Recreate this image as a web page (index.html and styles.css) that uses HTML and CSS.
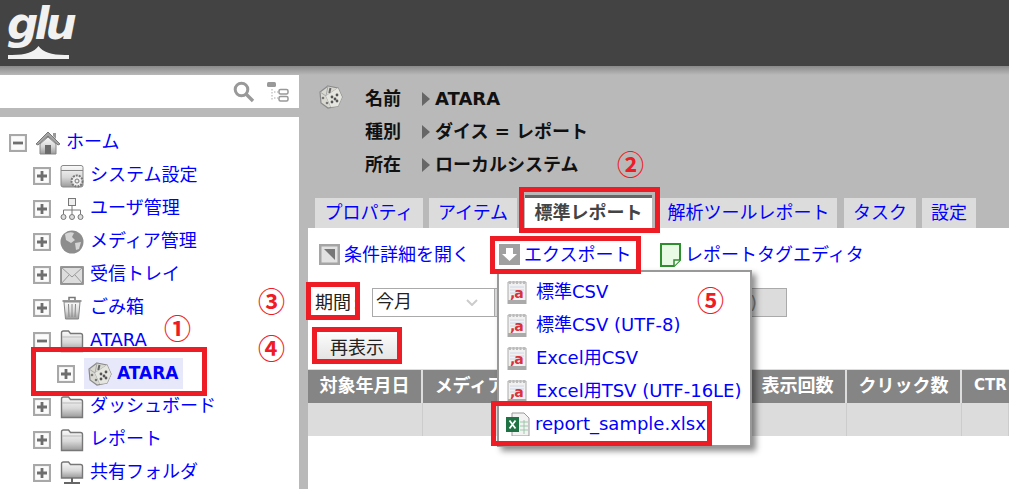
FILE: index.html
```html
<!DOCTYPE html>
<html lang="ja">
<head>
<meta charset="utf-8">
<title>glu</title>
<link rel="stylesheet" href="styles.css">
</head>
<body>
<svg class="defs" aria-hidden="true">
  <defs>
    <linearGradient id="gf" x1="0" y1="0" x2="0" y2="1"><stop offset="0" stop-color="#fafafa"/><stop offset=".55" stop-color="#d8d8d8"/><stop offset="1" stop-color="#9a9a9a"/></linearGradient>
    <symbol id="plus" viewBox="0 0 18 18"><rect x="1" y="1" width="16" height="16" fill="#fbfbfb" stroke="#a8a8a8" stroke-width="2.200"/><path d="M4 9h10M9 4v10" stroke="#6e6e6e" stroke-width="2.800"/></symbol>
    <symbol id="minus" viewBox="0 0 18 18"><rect x="1" y="1" width="16" height="16" fill="#fbfbfb" stroke="#a8a8a8" stroke-width="2.200"/><path d="M4 9h10" stroke="#6e6e6e" stroke-width="2.800"/></symbol>
    <symbol id="folder" viewBox="0 0 24 24"><path d="M1.500 22.500V4q0-2 2-2h5l2 2.500h10q2 0 2 2v16z" fill="url(#gf)" stroke="#777" stroke-width="1.400"/><path d="M2 8h20" stroke="#bbb"/></symbol>
    <symbol id="dice" viewBox="0 0 24 24"><path d="M9 1l10 2 4 9-4 9-10 2-7-5-1-11z" fill="#d9d9d2" stroke="#8a8a8a" stroke-width="1.200"/><path d="M9 1L7 11l12-8M7 11l5 11M7 11L1 7M12 22l7-1 4-9" fill="none" stroke="#a8a8a8"/><path d="M7 11l12-8 4 9-4 9-7 1z" fill="#e6e6e0"/><rect x="10" y="3" width="2" height="5" transform="rotate(14 11 5)" fill="#666"/><circle cx="4" cy="13" r="1.300" fill="#777"/><circle cx="8" cy="18" r="1.300" fill="#777"/><circle cx="13" cy="12" r="1.400" fill="#555"/><circle cx="18" cy="10" r="1.400" fill="#555"/><circle cx="16" cy="14" r="1.400" fill="#555"/><circle cx="13" cy="17" r="1.400" fill="#555"/><circle cx="18" cy="16" r="1.400" fill="#555"/></symbol>
    <symbol id="doc" viewBox="0 0 20 24"><path d="M1 2h18v22H1z" fill="#f1f1f1" stroke="#aaa"/><path d="M2 1h2v3H2zM5.500 1h2v3h-2zM9 1h2v3H9zM12.500 1h2v3h-2zM16 1h2v3h-2z" fill="#bbb"/><path d="M3 7h14M3 10h14M3 13h14" stroke="#cfd6e6"/><path d="M1 20h18v4H1z" fill="#aaa"/></symbol>
  </defs>
</svg>

<header class="topbar">
  <div class="logo"><span class="logo-text">glu</span>
    <svg class="logo-base" viewBox="0 0 62 14"><path d="M0 10q24 1 31-9q7 10 31 9v4H0z" fill="#f1f1f1"/></svg>
  </div>
</header>

<div class="shell">
  <aside class="side">
    <div class="searchbar">
      <svg class="ico-search" viewBox="0 0 22 22"><circle cx="8.500" cy="8.500" r="6.300" fill="none" stroke="#999" stroke-width="3"/><path d="M13 13l7 7" stroke="#999" stroke-width="3.400"/></svg>
      <svg class="ico-treeview" viewBox="0 0 22 20"><rect x="0" y="0" width="9" height="5" rx="1.500" fill="#999"/><path d="M5 7v11M7 10h4M7 16h4" stroke="#aaa" stroke-dasharray="1.500 1.500"/><rect x="12" y="7.500" width="9" height="4.500" rx="1.500" fill="none" stroke="#999" stroke-width="1.500"/><rect x="12" y="14.500" width="9" height="4.500" rx="1.500" fill="none" stroke="#999" stroke-width="1.500"/></svg>
    </div>
    <ul class="tree">
      <li class="row lvl0"><svg class="exp"><use href="#minus"/></svg>
        <svg class="node" viewBox="0 0 24 24"><path d="M0 13L12 1l12 12-2 1L12 5 2 14z" fill="#a5a5a5" stroke="#777"/><path d="M17 2h3v6l-3-3z" fill="#999"/><path d="M4 13l8-7 8 7v10H4z" fill="url(#gf)" stroke="#888"/><path d="M9 23v-9h6v9z" fill="#6a6a6a"/></svg>
        <a class="lnk">ホーム</a></li>
      <li class="row lvl1"><svg class="exp"><use href="#plus"/></svg>
        <svg class="node" viewBox="0 0 24 24"><rect x="1" y="1.500" width="22" height="21.500" rx="2" fill="url(#gf)" stroke="#888"/><path d="M1 6.500h22" stroke="#888"/><circle cx="17" cy="17" r="5.500" fill="#eee" stroke="#777" stroke-width="2" stroke-dasharray="2 1"/><circle cx="17" cy="17" r="2" fill="none" stroke="#777"/></svg>
        <a class="lnk">システム設定</a></li>
      <li class="row lvl1"><svg class="exp"><use href="#plus"/></svg>
        <svg class="node" viewBox="0 0 24 24"><rect x="8.500" y="1.500" width="7" height="7" fill="#eee" stroke="#777"/><path d="M12 9v4M3.500 17v-4h17v4M12 13v4" fill="none" stroke="#777"/><circle cx="3.500" cy="20" r="2.500" fill="#ddd" stroke="#777"/><circle cx="12" cy="20" r="2.500" fill="#ddd" stroke="#777"/><circle cx="20.500" cy="20" r="2.500" fill="#ddd" stroke="#777"/></svg>
        <a class="lnk">ユーザ管理</a></li>
      <li class="row lvl1"><svg class="exp"><use href="#plus"/></svg>
        <svg class="node" viewBox="0 0 24 24"><circle cx="12" cy="12" r="11.500" fill="#8d8d8d"/><path d="M5 4q5-3 9-1l-2 4 3 3-4 3-5-3zM15 13l6-1-2 7-3 1z" fill="#d4d4d4"/></svg>
        <a class="lnk">メディア管理</a></li>
      <li class="row lvl1"><svg class="exp"><use href="#plus"/></svg>
        <svg class="node" viewBox="0 0 24 24"><rect x="1" y="4" width="22" height="17" fill="#ddd" stroke="#777" stroke-width="1.500"/><path d="M1 4l11 10L23 4M1 21l8-9M23 21l-8-9" fill="none" stroke="#999"/></svg>
        <a class="lnk">受信トレイ</a></li>
      <li class="row lvl1"><svg class="exp"><use href="#plus"/></svg>
        <svg class="node" viewBox="0 0 24 24"><path d="M2.500 5h19M9 4V1.500h6V4" fill="none" stroke="#777" stroke-width="1.500"/><path d="M4 6h16l-1.500 17h-13z" fill="url(#gf)" stroke="#888"/><path d="M8.500 8l.5 13M12 8v13M15.500 8l-.5 13" stroke="#888"/></svg>
        <a class="lnk">ごみ箱</a></li>
      <li class="row lvl1"><svg class="exp"><use href="#minus"/></svg><svg class="node"><use href="#folder"/></svg><a class="lnk">ATARA</a></li>
      <li class="row lvl2"><svg class="exp"><use href="#plus"/></svg>
        <span class="selected"><svg class="node"><use href="#dice"/></svg><a class="lnk strong">ATARA</a></span></li>
      <li class="row lvl1"><svg class="exp"><use href="#plus"/></svg><svg class="node"><use href="#folder"/></svg><a class="lnk">ダッシュボード</a></li>
      <li class="row lvl1"><svg class="exp"><use href="#plus"/></svg><svg class="node"><use href="#folder"/></svg><a class="lnk">レポート</a></li>
      <li class="row lvl1"><svg class="exp"><use href="#plus"/></svg>
        <svg class="node" viewBox="0 0 24 24"><path d="M1.500 17V3q0-2 2-2h5l2 2.500h10q2 0 2 2V17z" fill="url(#gf)" stroke="#777" stroke-width="1.400"/><path d="M12 17v4M4 22h16" stroke="#666" stroke-width="2"/></svg>
        <a class="lnk">共有フォルダ</a></li>
    </ul>
  </aside>

  <main class="main">
    <section class="info">
      <svg class="info-ico"><use href="#dice"/></svg>
      <dl class="facts">
        <div class="fact"><dt>名前</dt><dd>ATARA</dd></div>
        <div class="fact"><dt>種別</dt><dd>ダイス = レポート</dd></div>
        <div class="fact"><dt>所在</dt><dd>ローカルシステム</dd></div>
      </dl>
    </section>
    <nav class="tabs">
      <a class="tab t1">プロパティ</a>
      <a class="tab t2">アイテム</a>
      <a class="tab active">標準レポート</a>
      <a class="tab t4">解析ツールレポート</a>
      <a class="tab t5">タスク</a>
      <a class="tab t6">設定</a>
    </nav>
    <section class="panel">
      <div class="toolbar">
        <a class="tool tool1"><svg class="tool-ico" viewBox="0 0 21 21"><rect width="21" height="21" fill="#a5a5a5"/><rect x="2.500" y="2.500" width="16" height="16" fill="#e2e2e2"/><path d="M5 5h11v11z" fill="#777"/></svg>条件詳細を開く</a>
        <a class="tool tool2"><svg class="tool-ico" viewBox="0 0 21 21"><rect width="21" height="21" fill="#a0a0a0"/><path d="M7 4h7v6h4l-7.500 7L3 10h4z" fill="#fff"/></svg>エクスポート</a>
        <a class="tool"><svg class="tool-ico note" viewBox="0 0 21 24"><path d="M1 1h19v16l-6 6H1z" fill="#e9fbe4" stroke="#2f8f2f" stroke-width="2"/><path d="M14 23v-6h6" fill="#fff" stroke="#2f8f2f" stroke-width="1.500"/></svg>レポートタグエディタ</a>
      </div>
      <div class="formrow">
        <span class="flabel">期間</span><span class="colon">:</span>
        <span class="select">今月<svg class="chev" viewBox="0 0 12 7"><path d="M1 1l5 5 5-5" fill="none" stroke="#ccc" stroke-width="2"/></svg></span>
        <span class="dateinput">)</span>
      </div>
      <div class="btnrow"><button class="btn" type="button">再表示</button></div>
      <div class="grid ghead">
        <div>対象年月日</div><div>メディア</div><div class="gap"></div><div>表示回数</div><div>クリック数</div><div class="ctr">CTR</div>
      </div>
      <div class="grid gbody">
        <div></div><div></div><div class="gap"></div><div></div><div></div><div></div>
      </div>
    </section>
  </main>
</div>

<div class="menu">
  <a class="mitem"><svg class="mico"><use href="#doc"/></svg><b class="ja">,a</b>標準CSV</a>
  <a class="mitem"><svg class="mico"><use href="#doc"/></svg><b class="ja">,a</b>標準CSV (UTF-8)</a>
  <a class="mitem"><svg class="mico"><use href="#doc"/></svg><b class="ja">,a</b>Excel用CSV</a>
  <a class="mitem"><svg class="mico"><use href="#doc"/></svg><b class="ja">,a</b>Excel用TSV (UTF-16LE)</a>
  <a class="mitem"><svg class="mico xl" viewBox="0 0 24 24"><path d="M6 1h12l5 5v18H6z" fill="#f2f2f2" stroke="#999"/><path d="M14 10h8M14 14h8M14 18h8M18 8v14" stroke="#9cc8a8"/><rect x="0" y="5" width="13" height="15" fill="#1f7244"/><path d="M3.500 8.500l6 8M9.500 8.500l-6 8" stroke="#fff" stroke-width="1.800"/></svg>report_sample.xlsx</a>
</div>

<div class="mark m1"></div>
<div class="mark m2"></div>
<div class="mark m3"></div>
<div class="mark m4"></div>
<div class="mark m5"></div>
<div class="mark m6"></div>
<span class="num n1">①</span>
<span class="num n2">②</span>
<span class="num n3">③</span>
<span class="num n4">④</span>
<span class="num n5">⑤</span>
</body>
</html>
```
FILE: styles.css
```css
* { box-sizing: border-box; }
html, body { margin: 0; height: 489px; overflow: hidden; }
body {
  position: relative;
  width: 1009px;
  background: #b9b9b9;
  font: 18px/33px "DejaVu Sans", "Noto Sans CJK JP", sans-serif;
  color: #222;
}
.defs { position: absolute; width: 0; height: 0; }
a { color: #0000ff; text-decoration: none; }

.topbar {
  height: 75px;
  padding-bottom: 9px;
  background: linear-gradient(#434343 0 66px, #8a8a8a 66px, #b9b9b9 75px);
}
.logo { position: relative; width: 80px; height: 66px; }
.logo-text {
  position: absolute; left: 7px; top: 2px;
  font: italic 700 44px/44px "DejaVu Sans", sans-serif;
  letter-spacing: -4px;
  color: #f1f1f1;
}
.logo-base { position: absolute; left: 8px; top: 45px; width: 61px; height: 14px; }

.shell { display: flex; height: 414px; }
.side { width: 299px; flex: none; display: flex; flex-direction: column; gap: 9px; }
.searchbar {
  height: 33px; background: #fff;
  display: flex; align-items: center; justify-content: flex-end;
  gap: 12px; padding-right: 10px;
}
.ico-search { width: 22px; height: 22px; }
.ico-treeview { width: 22px; height: 20px; }
.tree { margin: 0; padding: 9px 0 0; list-style: none; flex: 1; background: #fff; }
.row { display: flex; align-items: center; height: 33px; white-space: nowrap; }
.lnk { position: relative; top: -1px; }
.lvl0 { padding-left: 9px; }
.lvl1 { padding-left: 33px; }
.lvl2 { padding-left: 57px; }
.exp { width: 18px; height: 18px; flex: none; margin-right: 9px; }
.node { width: 24px; height: 24px; flex: none; margin-right: 6px; }
.selected {
  display: flex; align-items: center; height: 31px; width: 99px;
  padding-left: 4px; background: #e8e8fb;
}
.selected .node { margin-right: 5px; }
.strong { font-weight: 700; font-size: 17px; top: 0; }

.main { width: 701px; margin-left: 9px; flex: none; display: flex; flex-direction: column; }
.info { height: 123px; display: flex; padding: 10px 0 0 11px; }
.info-ico { width: 24px; height: 24px; flex: none; }
.facts { margin: -3px 0 0 22px; }
.fact { display: flex; height: 33px; align-items: center; font-weight: 700; color: #111; }
.fact dt { width: 57px; position: relative; }
.fact dt::after {
  content: ""; position: absolute; left: 57px; top: 10px;
  border-left: 8px solid #666; border-top: 7px solid transparent; border-bottom: 7px solid transparent;
}
.fact dd { margin: 0 0 0 13px; }

.tabs { height: 30px; display: flex; padding-left: 7px; align-items: flex-end; }
.tab { height: 30px; background: #dcdcdc; text-align: center; line-height: 30px; white-space: nowrap; }
.t1 { width: 108px; margin-right: 6px; }
.t2 { width: 88px; margin-right: 8px; }
.active {
  width: 127px; height: 33px; margin-right: 8px;
  background: #fff; border-top: 3px solid #666;
  color: #444; font-weight: 700;
}
.t4 { width: 177px; margin-right: 7px; }
.t5 { width: 72px; margin-right: 6px; }
.t6 { width: 54px; }

.panel { flex: 1; background: #fff; }
.toolbar { display: flex; height: 46px; padding: 10px 0 0 11px; line-height: 33px; }
.tool { display: flex; align-items: center; height: 33px; white-space: nowrap; }
.tool1 { width: 180px; }
.tool2 { width: 161px; }
.tool-ico { width: 21px; height: 21px; margin-right: 4px; flex: none; }
.note { width: 21px; height: 24px; }
.formrow { display: flex; align-items: center; height: 28px; margin-top: 14px; padding-left: 7px; }
.flabel { width: 36px; }
.colon { width: 21px; padding-left: 2px; }
.select {
  position: relative; width: 123px; height: 29px; line-height: 26px;
  background: #fff; border: 1px solid #aaa; padding-left: 3px;
}
.chev { position: absolute; right: 16px; top: 10px; width: 12px; height: 7px; }
.dateinput {
  width: 300px; height: 29px; line-height: 27px; margin-left: -8px;
  background: #dcdcdc; border: 1px solid #aaa; text-align: right; padding-right: 29px; color: #888;
}
.btnrow { height: 53px; padding: 15px 0 0 9px; }
.btn {
  width: 80px; height: 27px; padding: 0; border: 0;
  background: linear-gradient(#fbfbfb, #e2e2e2);
  font: 18px/27px "DejaVu Sans", "Noto Sans CJK JP", sans-serif; color: #222;
}
.grid { display: grid; grid-template-columns: 115px 96px 231px 97px 115px 47px; }
.ghead { height: 34px; background: #858585; color: #fff; font-weight: 700; font-size: 18px; border-top: 1px solid #ddd; line-height: 31px; }
.ghead div { border-right: 2px solid #ddd; text-align: center; white-space: nowrap; }
.ghead .ctr { border-right: 0; padding-left: 12px; text-align: left; font-size: 15px; }
.gbody { height: 33px; background: #dcdcdc; }
.gbody div { border-right: 1px solid #ccc; }

.menu {
  position: absolute; left: 497px; top: 270px; width: 255px; height: 177px;
  padding: 3px 0 0 8px; background: #fff;
  border: 2px solid #999; box-shadow: 4px 4px 6px rgba(0,0,0,.45);
}
.mitem { display: flex; align-items: center; height: 33px; white-space: nowrap; position: relative; }
.mico { width: 20px; height: 24px; margin-right: 9px; flex: none; }
.xl { width: 24px; margin-right: 5px; margin-left: -1px; }
.ja { position: absolute; left: 3px; top: 10px; font: 700 14px/16px "DejaVu Sans", sans-serif; letter-spacing: -1px; color: #d9323c; }

.mark { position: absolute; border: 5px solid #ee1c25; }
.m1 { left: 31px; top: 347px; width: 176px; height: 49px; }
.m2 { left: 519px; top: 187px; width: 141px; height: 46px; }
.m3 { left: 490px; top: 236px; width: 151px; height: 38px; }
.m4 { left: 306px; top: 282px; width: 54px; height: 38px; }
.m5 { left: 312px; top: 327px; width: 90px; height: 37px; }
.m6 { left: 491px; top: 401px; width: 221px; height: 45px; }
.num {
  position: absolute; font: 700 27px/30px "Noto Sans CJK JP", sans-serif; color: #ee1c25;
}
.n1 { left: 164px; top: 313px; }
.n2 { left: 617px; top: 149px; }
.n3 { left: 258px; top: 286px; }
.n4 { left: 258px; top: 333px; }
.n5 { left: 697px; top: 285px; }
```
